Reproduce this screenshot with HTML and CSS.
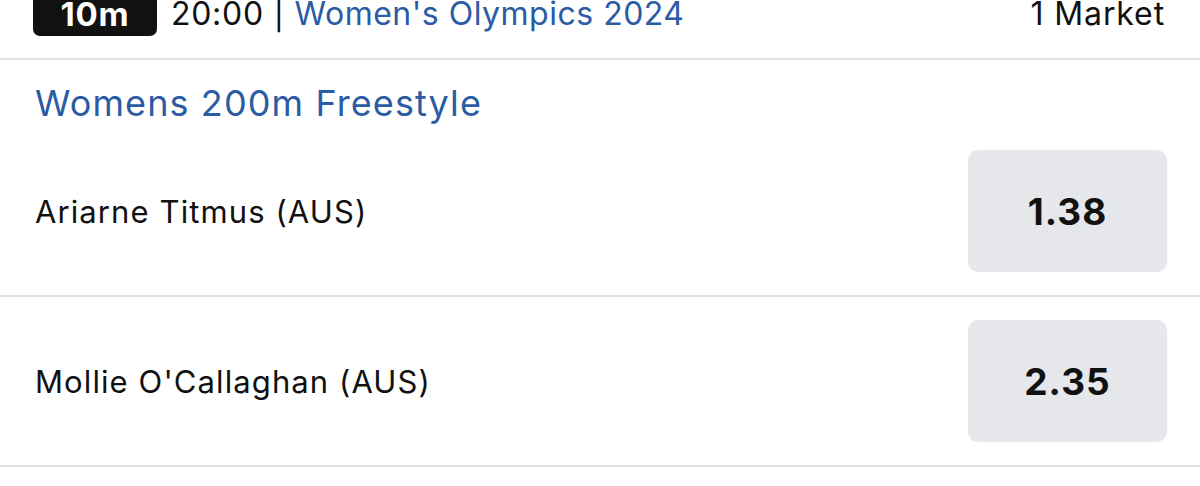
FILE: index.html
```html
<!DOCTYPE html>
<html>
<head>
<meta charset="utf-8">
<link rel="stylesheet" href="styles.css">
</head>
<body>
<div class="event">
  <div class="event-header">
    <span class="badge">10m</span>
    <span class="time">20:00 | <span class="comp">Women's Olympics 2024</span></span>
    <span class="markets">1 Market</span>
  </div>
  <div class="market">
    <div class="market-title">Womens 200m Freestyle</div>
    <div class="runner">
      <span class="runner-name">Ariarne Titmus (AUS)</span>
      <button class="odds">1.38</button>
    </div>
    <div class="runner">
      <span class="runner-name">Mollie O'Callaghan (AUS)</span>
      <button class="odds">2.35</button>
    </div>
  </div>
</div>
</body>
</html>
```
FILE: styles.css
```css
html, body {
  margin: 0;
  padding: 0;
  background: #fff;
}
body {
  font-family: Inter, "Noto Sans", "Liberation Sans", sans-serif;
  color: #111;
  overflow: hidden;
}
.event-header {
  display: flex;
  align-items: center;
  height: 52px;
  margin-top: -12px;
  padding: 0 35px 18px 33px;
  border-bottom: 2px solid #e2e2e2;
}
.badge {
  display: flex;
  align-items: center;
  justify-content: center;
  background: #111;
  color: #fff;
  font-weight: 700;
  font-size: 33px;
  letter-spacing: 0.8px;
  width: 124px;
  height: 44px;
  padding-top: 0;
  box-sizing: border-box;
  border-radius: 7px;
}
.time {
  margin-left: 14px;
  font-size: 32px;
  letter-spacing: 0.7px;
  flex: 1;
  line-height: 1;
}
.comp {
  color: #2b5ba4;
  letter-spacing: 0.5px;
}
.markets {
  font-size: 32px;
  letter-spacing: 0.9px;
  line-height: 1;
}
.market-title {
  color: #2b5ba4;
  font-size: 36px;
  letter-spacing: 1.1px;
  height: 49px;
  padding: 18px 35px 0;
  display: flex;
  align-items: center;
}
.runner {
  display: flex;
  align-items: center;
  justify-content: space-between;
  padding: 23px 33px 23px 35px;
  border-bottom: 2px solid #e2e2e2;
}
.runner-name {
  font-size: 31px;
  letter-spacing: 1.1px;
}
.odds {
  width: 199px;
  height: 122px;
  border: none;
  border-radius: 10px;
  background: #e5e7eb;
  font-family: inherit;
  font-size: 37px;
  letter-spacing: 1px;
  font-weight: 700;
  color: #111;
  padding: 0;
}
```
